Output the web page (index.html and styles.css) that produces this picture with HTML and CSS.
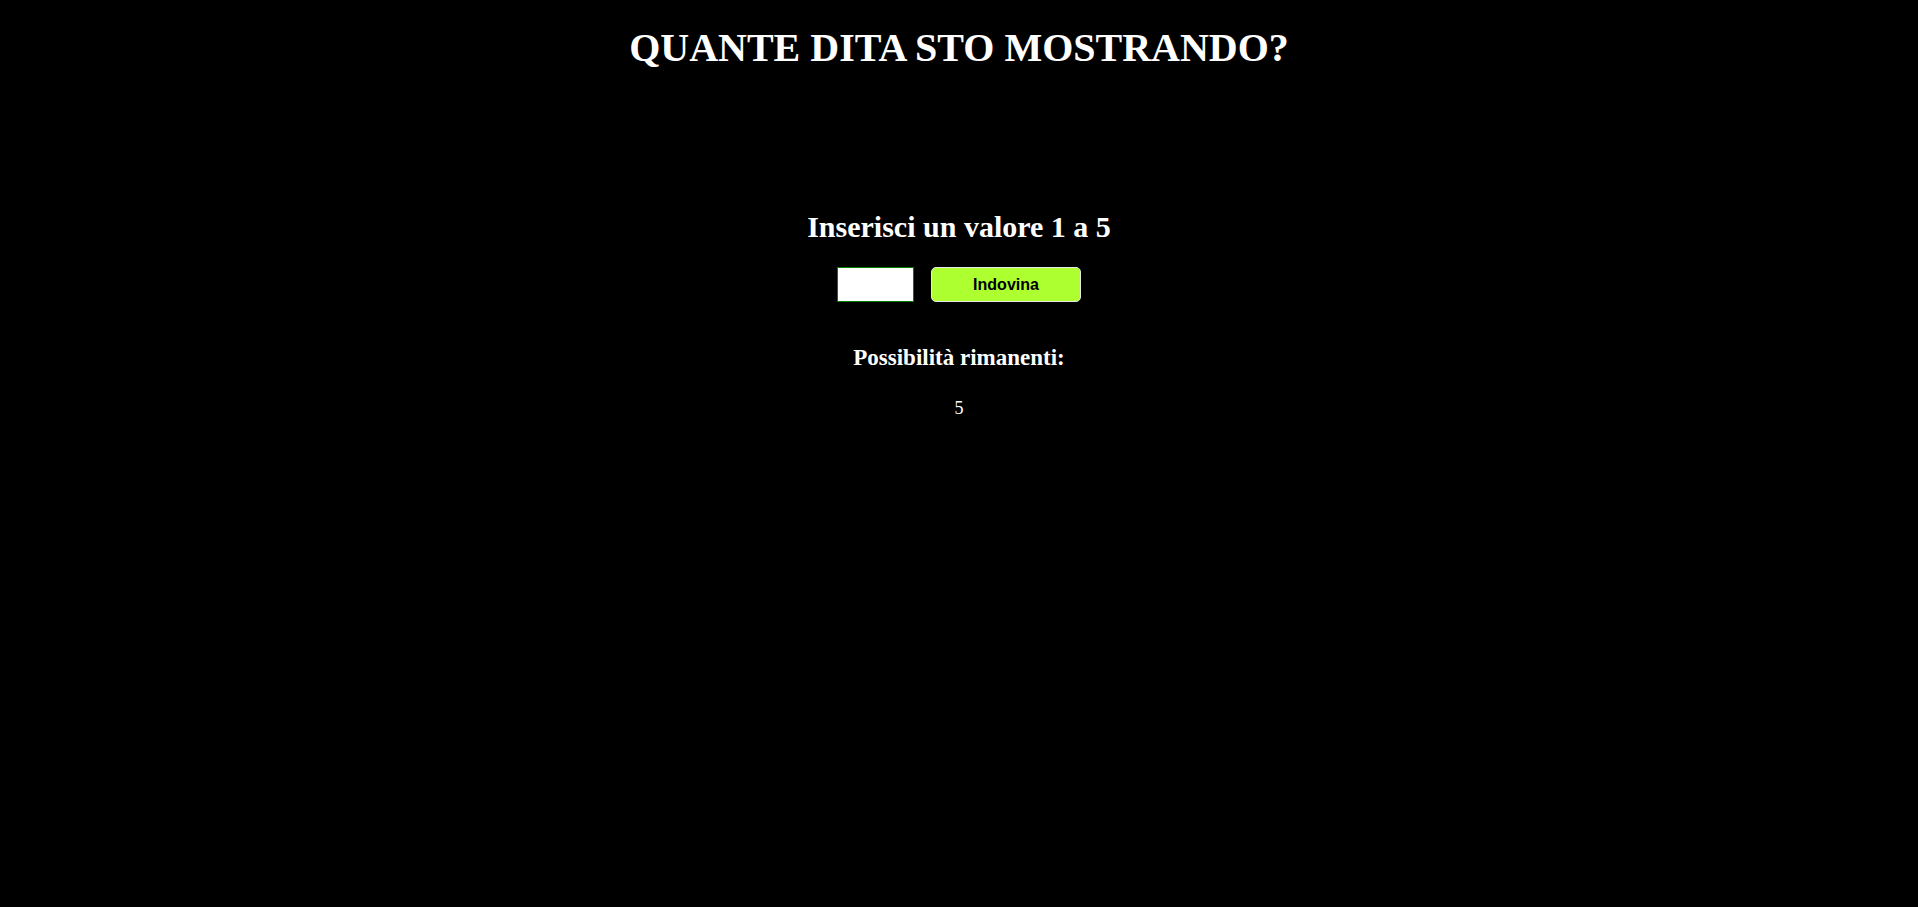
FILE: index.html
```html
<!DOCTYPE html>
<html lang="it">
<head>
<meta charset="utf-8">
<title>Quante dita sto mostrando?</title>
<link rel="stylesheet" href="styles.css">
</head>
<body>
  <header class="header">
    <h1 class="title">QUANTE DITA STO MOSTRANDO?</h1>
  </header>
  <main class="game">
    <h2 class="prompt">Inserisci un valore 1 a 5</h2>
    <div class="controls">
      <input class="guess" type="text">
      <button class="btn" type="button">Indovina</button>
    </div>
    <h3 class="remaining-label">Possibilità rimanenti:</h3>
    <p class="remaining">5</p>
  </main>
</body>
</html>
```
FILE: styles.css
```css
html, body {
  margin: 0;
  padding: 0;
  background: #000;
  color: #fff;
  font-family: "Liberation Serif", "Times New Roman", serif;
}
.header {
  text-align: center;
  padding-top: 25px;
}
.title {
  margin: 0;
  font-size: 40px;
  font-weight: bold;
  line-height: 46px;
}
.game {
  display: flex;
  flex-direction: column;
  align-items: center;
  padding-top: 139px;
}
.prompt {
  margin: 0;
  font-size: 30px;
  line-height: 34px;
}
.controls {
  display: flex;
  gap: 17px;
  margin-top: 23px;
}
.guess {
  box-sizing: border-box;
  width: 77px;
  height: 35px;
  border: 1px solid #008000;
  background: #fff;
  padding: 0;
  margin: 0;
}
.btn {
  box-sizing: border-box;
  width: 150px;
  height: 35px;
  margin: 0;
  background: #adff2f;
  border: 1px solid #e6e6e6;
  border-radius: 5px;
  font-family: "Liberation Sans", Arial, sans-serif;
  font-weight: bold;
  font-size: 16px;
  color: #000;
}
.remaining-label {
  margin: 42px 0 0;
  font-size: 23px;
  line-height: 28px;
}
.remaining {
  margin: 25px 0 0;
  font-size: 18px;
  line-height: 22px;
}
```
